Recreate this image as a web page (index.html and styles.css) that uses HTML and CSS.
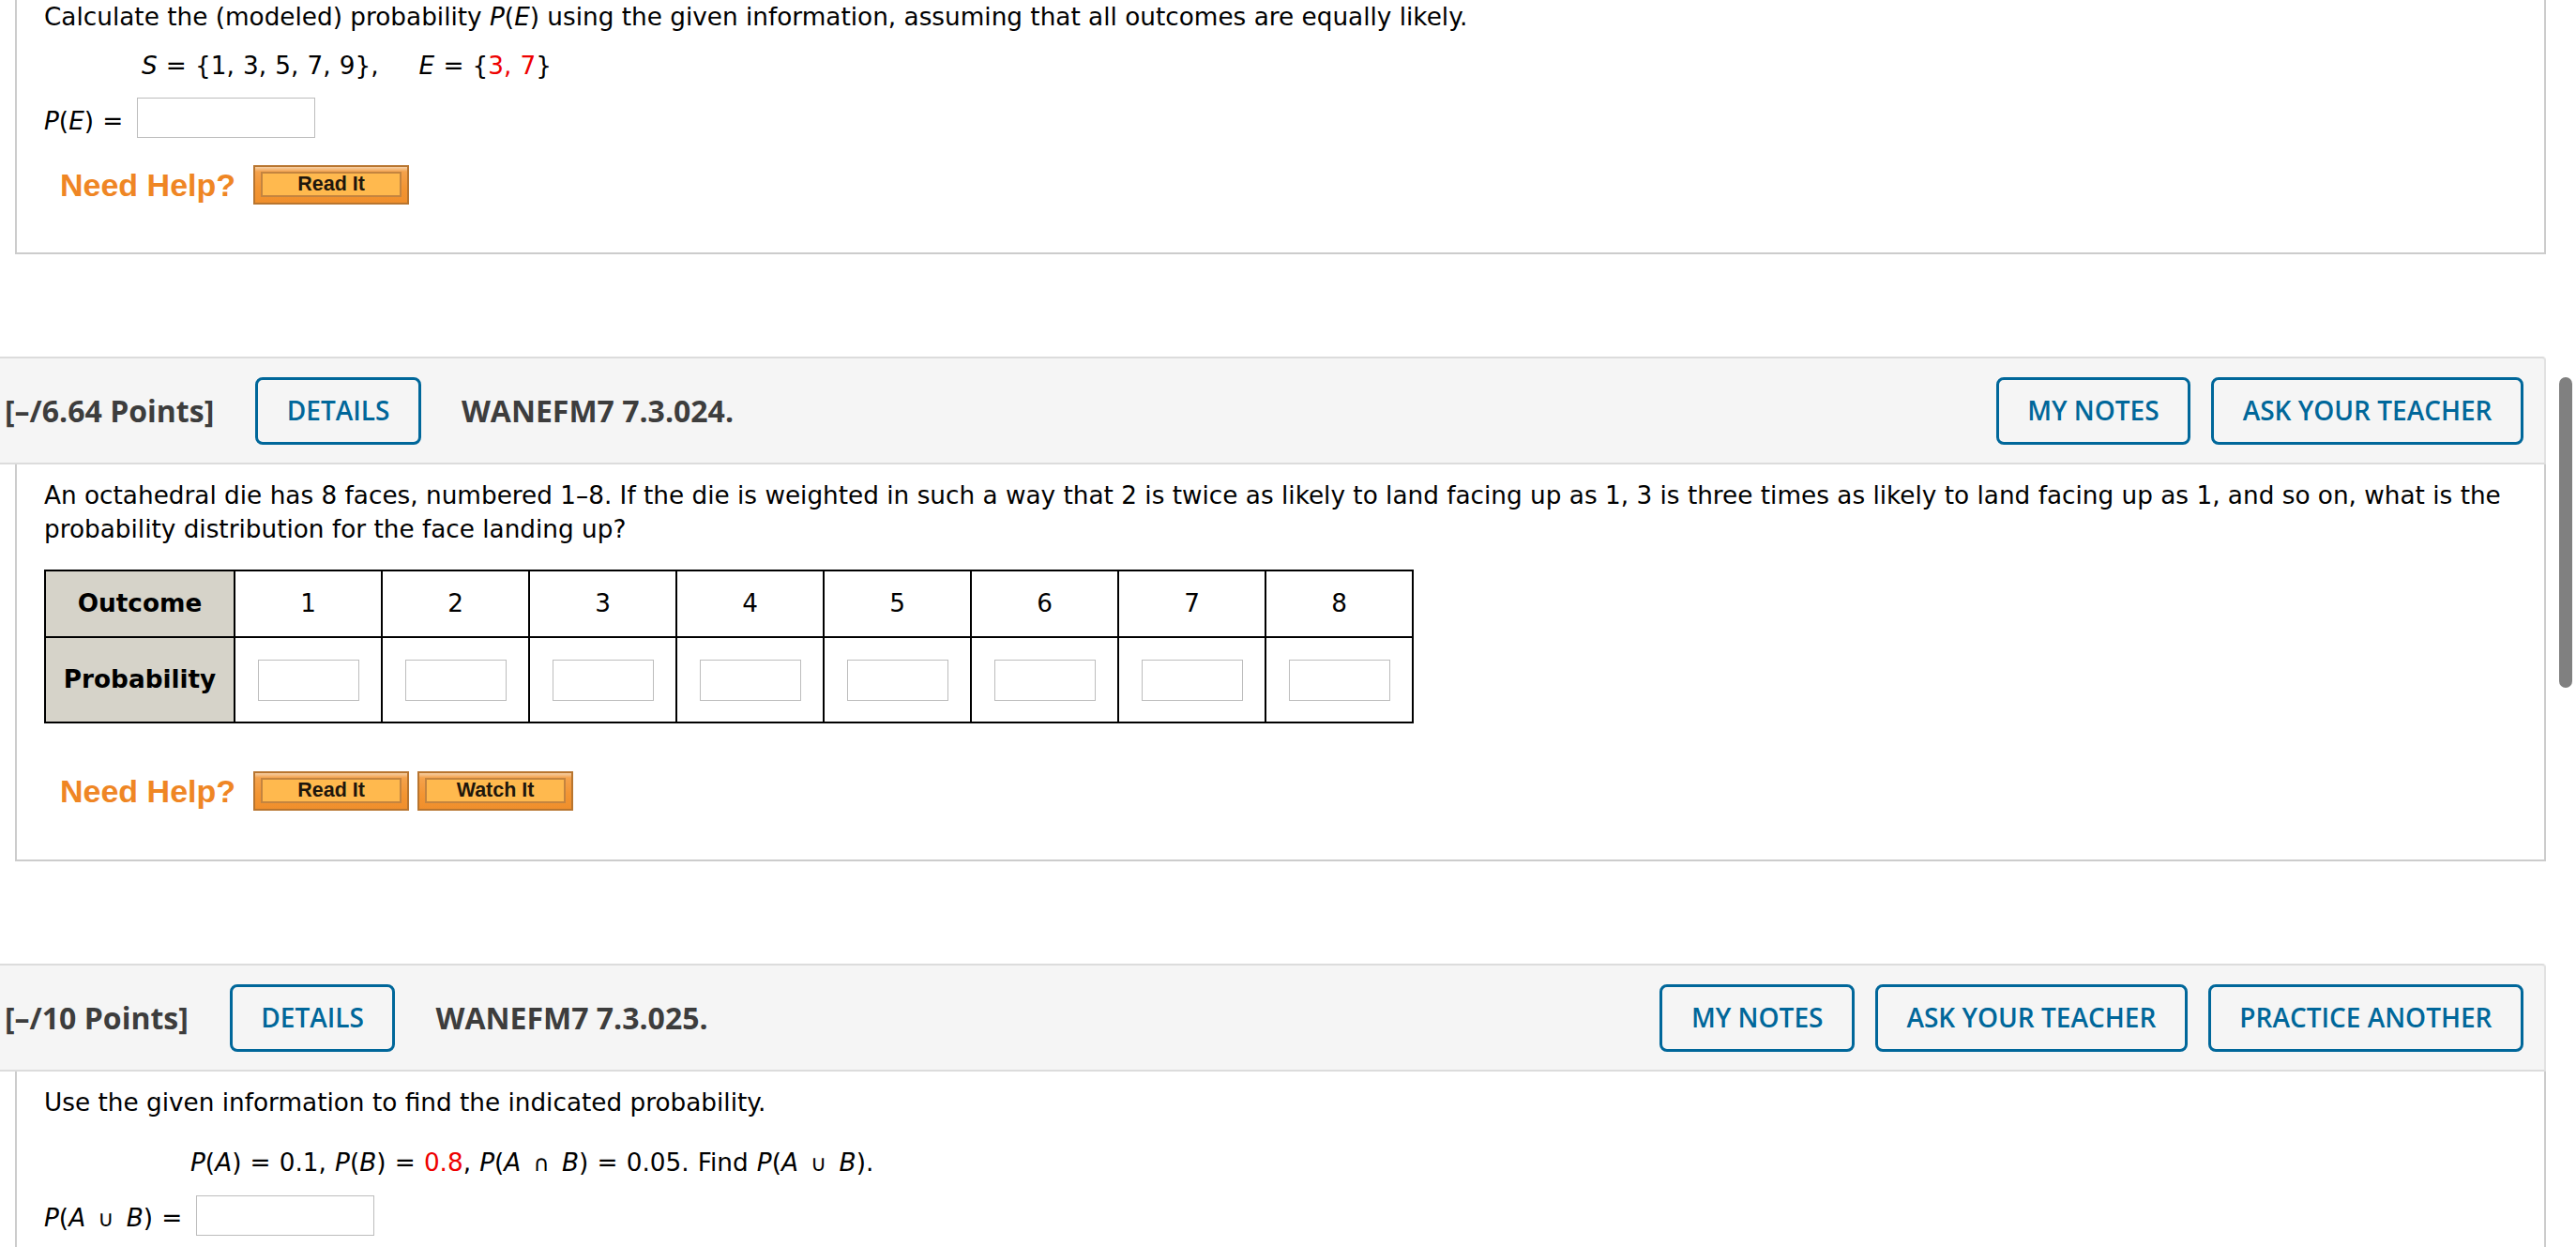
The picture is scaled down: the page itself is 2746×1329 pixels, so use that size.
FILE: index.html
```html
<!DOCTYPE html>
<html lang="en">
<head>
<meta charset="utf-8">
<title>Probability questions</title>
<link rel="stylesheet" href="styles.css">
</head>
<body>
<div class="page">

  <section class="card card-1">
    <div class="qbody qbody-top">
      <p class="q">Calculate the (modeled) probability <i>P</i>(<i>E</i>) using the given information, assuming that all outcomes are equally likely.</p>
      <p class="formula f1"><i>S</i> = {1, 3, 5, 7, 9},<span class="gap"></span><i>E</i> = {<span class="red">3, 7</span>}</p>
      <div class="answer"><span class="lbl"><i>P</i>(<i>E</i>) =</span><span class="inp"></span></div>
      <div class="help"><span class="need">Need Help?</span><span class="hbtn"><span>Read It</span></span></div>
    </div>
  </section>

  <section class="card card-2">
    <header class="qhead">
      <span class="pts">[–/6.64 Points]</span>
      <span class="btn details">DETAILS</span>
      <span class="qid">WANEFM7 7.3.024.</span>
      <div class="actions">
        <span class="btn">MY NOTES</span>
        <span class="btn">ASK YOUR TEACHER</span>
      </div>
    </header>
    <div class="qbody qbody-2">
      <p class="q nowrap">An octahedral die has 8 faces, numbered 1–8. If the die is weighted in such a way that 2 is twice as likely to land facing up as 1, 3 is three times as likely to land facing up as 1, and so on, what is the<br>probability distribution for the face landing up?</p>
      <table class="dist">
        <colgroup>
          <col class="c-head"><col><col><col><col><col><col><col><col>
        </colgroup>
        <tr class="r1">
          <th>Outcome</th><td>1</td><td>2</td><td>3</td><td>4</td><td>5</td><td>6</td><td>7</td><td>8</td>
        </tr>
        <tr class="r2">
          <th>Probability</th>
          <td><span class="cell-inp"></span></td><td><span class="cell-inp"></span></td><td><span class="cell-inp"></span></td><td><span class="cell-inp"></span></td>
          <td><span class="cell-inp"></span></td><td><span class="cell-inp"></span></td><td><span class="cell-inp"></span></td><td><span class="cell-inp"></span></td>
        </tr>
      </table>
      <div class="help help-2"><span class="need">Need Help?</span><span class="hbtn"><span>Read It</span></span><span class="hbtn hbtn-2"><span>Watch It</span></span></div>
    </div>
  </section>

  <section class="card card-3">
    <header class="qhead">
      <span class="pts">[–/10 Points]</span>
      <span class="btn details">DETAILS</span>
      <span class="qid">WANEFM7 7.3.025.</span>
      <div class="actions">
        <span class="btn">MY NOTES</span>
        <span class="btn">ASK YOUR TEACHER</span>
        <span class="btn">PRACTICE ANOTHER</span>
      </div>
    </header>
    <div class="qbody">
      <p class="q">Use the given information to find the indicated probability.</p>
      <p class="formula f3"><i>P</i>(<i>A</i>) = 0.1, <i>P</i>(<i>B</i>) = <span class="red">0.8</span>, <i>P</i>(<i>A</i> <span class="op">∩</span> <i>B</i>) = 0.05. Find <i>P</i>(<i>A</i> <span class="op">∪</span> <i>B</i>).</p>
      <div class="answer"><span class="lbl"><i>P</i>(<i>A</i> <span class="op">∪</span> <i>B</i>) =</span><span class="inp"></span></div>
    </div>
  </section>

</div>
<div class="scroll-thumb"></div>
</body>
</html>
```
FILE: styles.css
```css
html, body {
  margin: 0;
  padding: 0;
  background: #ffffff;
}
body {
  width: 2746px;
  height: 1329px;
  overflow: hidden;
  font-family: "DejaVu Sans", Verdana, sans-serif;
  font-size: 26.3px;
  line-height: 36.5px;
  color: #000;
}
p { margin: 0; }

.card { width: 2714px; }
.card-2 { margin-top: 109px; }
.card-3 { margin-top: 109px; }

/* header bar */
.qhead {
  height: 115px;
  box-sizing: border-box;
  background: #f5f5f5;
  border-top: 2px solid #dcdcdc;
  border-bottom: 2px solid #dcdcdc;
  border-right: 2px solid #e2e2e2;
  border-top-right-radius: 4px;
  display: flex;
  align-items: center;
  padding: 0 22px 0 5px;
  font-family: "Open Sans", "DejaVu Sans", sans-serif;
}
.pts, .qid {
  font-weight: 700;
  font-size: 32px;
  color: #3d3d3d;
  line-height: 1;
}
.btn {
  height: 72px;
  box-sizing: border-box;
  border: 3.5px solid #00679a;
  border-radius: 8px;
  padding: 0 30.5px;
  display: inline-flex;
  align-items: center;
  font-size: 28px;
  font-weight: 600;
  color: #00679a;
  white-space: nowrap;
}
.details { margin-left: 44px; }
.qid { margin-left: 43px; }
.actions {
  margin-left: auto;
  display: flex;
  gap: 22px;
}

/* body */
.qbody {
  margin-left: 16px;
  border: 2px solid #cccccc;
  border-top: none;
  padding: 14.5px 0 50px 29px;
}
.qbody-top {
  padding-top: 0;
  padding-bottom: 51px;
}
.qbody-2 { padding-bottom: 52px; }
.nowrap { white-space: nowrap; }
.red { color: #ee0000; }
.formula, .lbl { word-spacing: 0.8px; }
.op { font-size: 0.9em; margin: 0 4px; }
.gap { display: inline-block; width: 43px; }

.f1 { margin-top: 15px; padding-left: 104px; }
.f3 { margin-top: 27.5px; padding-left: 156px; }

.answer {
  margin-top: 16px;
  display: flex;
  align-items: flex-end;
}
.inp {
  display: inline-block;
  width: 190px;
  height: 43px;
  box-sizing: border-box;
  border: 1.5px solid #bdbdbd;
  background: #fff;
  margin-left: 15px;
}

/* help row */
.help {
  margin-top: 29px;
  display: flex;
  align-items: center;
  height: 42px;
  padding-left: 17px;
}
.help-2 { margin-top: 51px; }
.need {
  font-family: "Liberation Sans", Arial, sans-serif;
  font-weight: 700;
  font-size: 34px;
  color: #ef8624;
  margin-right: 19px;
  line-height: 1;
}
.hbtn {
  display: inline-block;
  width: 166px;
  height: 42px;
  box-sizing: border-box;
  border: 2px solid #b8752f;
  background: linear-gradient(#f6d0a6 0px, #f4a24c 5px, #f39532 60%, #f08f2c 100%);
  padding: 5px 6px 6px 6px;
}
.hbtn span {
  display: flex;
  height: 100%;
  box-sizing: border-box;
  border: 2px solid #c4843f;
  background: #ffb94e;
  align-items: center;
  justify-content: center;
  font-family: "Liberation Sans", Arial, sans-serif;
  font-weight: 700;
  font-size: 21.5px;
  color: #1e160c;
  line-height: 1;
}
.hbtn-2 { margin-left: 9px; }

/* table */
.dist {
  margin-top: 24.5px;
  border-collapse: collapse;
  table-layout: fixed;
  width: 1458px;
  border: 2.5px solid #000;
}
.dist col { width: 157px; }
.dist col.c-head { width: 202px; }
.dist th, .dist td {
  border: 2px solid #000;
  text-align: center;
  padding: 0;
}
.dist th {
  background: #d6d3c9;
  font-weight: 700;
}
.dist .r1 th, .dist .r1 td { height: 69px; }
.dist .r2 th, .dist .r2 td { height: 89px; }
.cell-inp {
  display: inline-block;
  width: 108px;
  height: 44px;
  box-sizing: border-box;
  border: 1.5px solid #bdbdbd;
  vertical-align: middle;
}

.scroll-thumb {
  position: fixed;
  left: 2728px;
  top: 402px;
  width: 14px;
  height: 331px;
  border-radius: 7px;
  background: #808080;
}
```
